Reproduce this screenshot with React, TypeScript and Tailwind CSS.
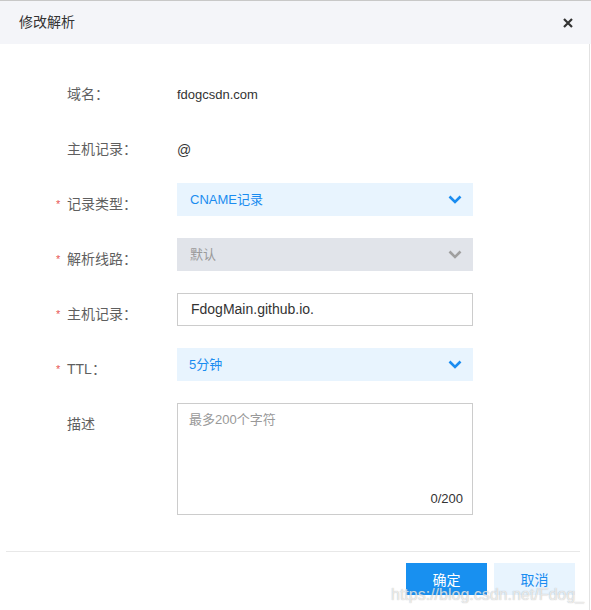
import React from "react";

const font = { fontFamily: '"Liberation Sans","Noto Sans CJK SC",sans-serif' };

function Chevron({ color }: { color: string }) {
  return (
    <svg width="14" height="9" viewBox="0 0 14 9" fill="none">
      <polyline points="1.5,1.5 7,7 12.5,1.5" stroke={color} strokeWidth="2.6" strokeLinecap="butt" strokeLinejoin="miter" />
    </svg>
  );
}

function Label({ text, required }: { text: string; required?: boolean }) {
  return (
    <div className="relative w-[177px] shrink-0 pl-[67px] pt-[11px] text-[14px] leading-[20px] text-[#5f5f5f] whitespace-nowrap">
      {required && (
        <span className="absolute left-[56px] top-[16px] text-[11px] leading-[11px] text-[#e85555]">*</span>
      )}
      {text}
    </div>
  );
}

export default function App() {
  return (
    <div className="w-[591px] h-[610px] bg-white relative overflow-hidden" style={font}>
      <div className="border-t border-[#c8c8c8] h-[44px] bg-[#f4f5f9] flex items-center justify-between pl-[19px] pr-[18px]">
        <span className="text-[14px] text-[#333]">修改解析</span>
        <svg width="10" height="10" viewBox="0 0 10 10">
          <path d="M1 1L9 9M9 1L1 9" stroke="#333" strokeWidth="2.2" />
        </svg>
      </div>
      <div className="border-r border-[#e2e2e2] h-[566px] mr-[1px]">
        <div className="pt-[29px] flex flex-col gap-[22px]">
          <div className="flex h-[33px]">
            <Label text="域名：" />
            <div className="pt-[12px] text-[13px] leading-[20px] text-[#333]">fdogcsdn.com</div>
          </div>
          <div className="flex h-[33px]">
            <Label text="主机记录：" />
            <div className="pt-[12px] text-[14px] leading-[20px] text-[#333]">@</div>
          </div>
          <div className="flex h-[33px]">
            <Label text="记录类型：" required />
            <div className="w-[296px] h-[33px] bg-[#e8f4fe] flex items-center justify-between pl-[13px] pr-[11px] text-[13px] text-[#1a8cf0]">
              <span>CNAME记录</span>
              <Chevron color="#1a8cf0" />
            </div>
          </div>
          <div className="flex h-[33px]">
            <Label text="解析线路：" required />
            <div className="w-[296px] h-[33px] bg-[#e1e4ea] flex items-center justify-between pl-[13px] pr-[11px] text-[13px] text-[#9a9a9a]">
              <span>默认</span>
              <Chevron color="#a0a0a0" />
            </div>
          </div>
          <div className="flex h-[33px]">
            <Label text="主机记录：" required />
            <div className="w-[296px] h-[33px] border border-[#cccccc] flex items-center pl-[13px] text-[14px] text-[#333]">
              FdogMain.github.io.
            </div>
          </div>
          <div className="flex h-[33px]">
            <Label text="TTL：" required />
            <div className="w-[296px] h-[33px] bg-[#e8f4fe] flex items-center justify-between pl-[12px] pr-[11px] text-[13px] text-[#1a8cf0]">
              <span>5分钟</span>
              <Chevron color="#1a8cf0" />
            </div>
          </div>
          <div className="flex h-[112px]">
            <Label text="描述" />
            <div className="w-[296px] h-[112px] border border-[#cccccc] flex flex-col justify-between pl-[11px] pr-[9px] pt-[6px] pb-[5px]">
              <span className="text-[13px] leading-[20px] text-[#999]">最多200个字符</span>
              <span className="self-end text-[13px] leading-[20px] text-[#333]">0/200</span>
            </div>
          </div>
        </div>
        <div className="mt-[36px] mx-[6px] mr-[9px] border-t border-[#e8e8e8]" />
        <div className="flex justify-end gap-[7px] pt-[11px] pr-[14px]">
          <div className="w-[81px] h-[32px] bg-[#1890f0] text-white text-[14px] flex items-center justify-center pt-[3px]">确定</div>
          <div className="w-[81px] h-[32px] bg-[#e8f4fe] text-[#1a8cf0] text-[14px] flex items-center justify-center pt-[3px]">取消</div>
        </div>
      </div>
      <div className="absolute left-[391px] top-[585px] text-[16px] leading-[20px] text-white/70 [text-shadow:0_0_1px_rgba(120,120,120,0.6)] whitespace-nowrap pointer-events-none">
        https://blog.csdn.net/Fdog_
      </div>
    </div>
  );
}
